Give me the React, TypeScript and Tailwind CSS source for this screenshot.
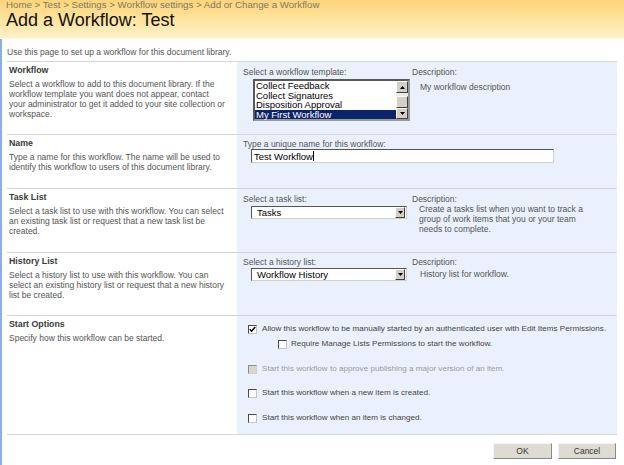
import React from "react";

function Arrow({ up }: { up?: boolean }) {
  return (
    <svg width="5" height="3" viewBox="0 0 5 3">
      <path d={up ? "M0 3 L2.5 0 L5 3 Z" : "M0 0 L5 0 L2.5 3 Z"} fill="#000" />
    </svg>
  );
}

function SBtn({ up, className }: { up?: boolean; className: string }) {
  return (
    <div
      className={
        "flex items-center justify-center bg-[#d4d0c8] border border-t-[#ffffff] border-l-[#ffffff] border-b-[#404040] border-r-[#404040] " +
        className
      }
    >
      <Arrow up={up} />
    </div>
  );
}

function Select({ value }: { value: string }) {
  return (
    <div className="ml-[8px] w-[156px] h-[13px] flex items-center bg-white border border-t-[#555555] border-l-[#555555] border-b-[#d4d0c8] border-r-[#d4d0c8]">
      <span className="flex-1 pl-[5px] text-[9.5px] leading-[11px] text-black whitespace-nowrap">{value}</span>
      <SBtn className="w-[10px] h-[11px] mr-[1px]" />
    </div>
  );
}

function Check({ checked, disabled }: { checked?: boolean; disabled?: boolean }) {
  return (
    <span
      className={
        disabled
          ? "inline-flex w-[9px] h-[9px] shrink-0 bg-[#d8d6d0] border border-t-[#8c8c8c] border-l-[#8c8c8c] border-b-[#d0d0d0] border-r-[#d0d0d0]"
          : "inline-flex w-[9px] h-[9px] shrink-0 items-center justify-center bg-white border border-t-[#4a4a4a] border-l-[#4a4a4a] border-b-[#c4c4c4] border-r-[#c4c4c4]"
      }
    >
      {checked && (
        <svg width="7" height="7" viewBox="0 0 7 7">
          <path d="M0.8 3.2 L2.6 5.2 L6.2 1" stroke="#000" strokeWidth="1.5" fill="none" />
        </svg>
      )}
    </span>
  );
}

function Section({
  h,
  title,
  desc,
  children,
}: {
  h: string;
  title: string;
  desc: React.ReactNode;
  children: React.ReactNode;
}) {
  return (
    <div className={"flex border-t border-[#d5d5d5] " + h}>
      <div className="w-[230px] shrink-0 pl-[2px] pt-[3px]">
        <div className="text-[8.8px] leading-[10px] font-bold text-[#3a3a3a] whitespace-nowrap">{title}</div>
        <div className="mt-[4px] text-[8.5px] leading-[10px] text-[#555555] whitespace-nowrap">{desc}</div>
      </div>
      <div className="flex-1 min-w-0 bg-[#eaf1fd]">{children}</div>
    </div>
  );
}

const label = "text-[8.5px] leading-[10px] text-[#555555] whitespace-nowrap";

export default function App() {
  return (
    <div className="w-[624px] h-[465px] bg-white overflow-hidden flex flex-col font-['Liberation_Sans',Arial,sans-serif]">
      {/* header */}
      <div className="h-[39px] shrink-0 pl-[6px] bg-gradient-to-b from-[#fdd47a] via-[#fee39c] to-[#fff1c8] border-b border-[#fff6dc]">
        <div className="text-[9.7px] leading-[10px] text-[#7f7865] whitespace-nowrap">
          Home &gt; Test &gt; Settings &gt; Workflow settings &gt; Add or Change a Workflow
        </div>
        <div className="text-[18px] leading-[20px] text-[#111111] whitespace-nowrap">Add a Workflow: Test</div>
      </div>

      {/* body */}
      <div className="flex-1 border-l-2 border-[#8aaee6]">
        <div className="h-[22px] pt-[8px] pl-[5px] text-[8.5px] leading-[10px] text-[#555555] whitespace-nowrap">
          Use this page to set up a workflow for this document library.
        </div>

        <div className="ml-[5px] w-[610px]">
          {/* Workflow */}
          <Section
            h="h-[73px]"
            title="Workflow"
            desc={
              <>
                Select a workflow to add to this document library. If the
                <br />
                workflow template you want does not appear, contact
                <br />
                your administrator to get it added to your site collection or
                <br />
                workspace.
              </>
            }
          >
            <div className="flex pl-[6px] pt-[5px]">
              <div className="w-[169px] shrink-0">
                <div className={label}>Select a workflow template:</div>
                <div className="ml-[10px] mt-[2px] w-[157px] h-[42px] flex bg-white border-2 border-t-[#5a5a5a] border-l-[#5a5a5a] border-b-[#9a9a9a] border-r-[#9a9a9a]">
                  <div className="flex-1 text-[9.5px] leading-[9.5px] text-black whitespace-nowrap">
                    <div className="h-[9.5px] pl-[1px]">Collect Feedback</div>
                    <div className="h-[9.5px] pl-[1px]">Collect Signatures</div>
                    <div className="h-[9.5px] pl-[1px]">Disposition Approval</div>
                    <div className="h-[9.5px] pl-[1px] bg-[#0a246a] text-white">My First Workflow</div>
                  </div>
                  <div className="w-[12px] flex flex-col bg-[#eeede8]">
                    <SBtn up className="h-[12px]" />
                    <div className="h-[3px]" />
                    <div className="h-[12px] bg-[#d4d0c8] border border-t-[#ffffff] border-l-[#ffffff] border-b-[#404040] border-r-[#404040]" />
                    <SBtn className="h-[11px]" />
                  </div>
                </div>
              </div>
              <div>
                <div className={label}>Description:</div>
                <div className={"mt-[5px] ml-[8px] " + label}>My workflow description</div>
              </div>
            </div>
          </Section>

          {/* Name */}
          <Section
            h="h-[54px]"
            title="Name"
            desc={
              <>
                Type a name for this workflow. The name will be used to
                <br />
                identify this workflow to users of this document library.
              </>
            }
          >
            <div className="pl-[6px] pt-[4px]">
              <div className={label}>Type a unique name for this workflow:</div>
              <div className="ml-[8px] w-[303px] h-[14px] flex items-center bg-white border border-t-[#555555] border-l-[#555555] border-b-[#d4d0c8] border-r-[#d4d0c8]">
                <span className="pl-[2px] text-[9.5px] leading-[11px] text-black whitespace-nowrap">Test Workflow</span>
                <span className="w-[1px] h-[10px] bg-black" />
              </div>
            </div>
          </Section>

          {/* Task List */}
          <Section
            h="h-[64px]"
            title="Task List"
            desc={
              <>
                Select a task list to use with this workflow. You can select
                <br />
                an existing task list or request that a new task list be
                <br />
                created.
              </>
            }
          >
            <div className="flex pl-[6px] pt-[5px]">
              <div className="w-[169px] shrink-0">
                <div className={label}>Select a task list:</div>
                <div className="mt-[2px]">
                  <Select value="Tasks" />
                </div>
              </div>
              <div>
                <div className={label}>Description:</div>
                <div className={"ml-[7px] " + label}>
                  Create a tasks list when you want to track a
                  <br />
                  group of work items that you or your team
                  <br />
                  needs to complete.
                </div>
              </div>
            </div>
          </Section>

          {/* History List */}
          <Section
            h="h-[63px]"
            title="History List"
            desc={
              <>
                Select a history list to use with this workflow. You can
                <br />
                select an existing history list or request that a new history
                <br />
                list be created.
              </>
            }
          >
            <div className="flex pl-[6px] pt-[4px]">
              <div className="w-[169px] shrink-0">
                <div className={label}>Select a history list:</div>
                <div className="mt-[1px]">
                  <Select value="Workflow History" />
                </div>
              </div>
              <div>
                <div className={label}>Description:</div>
                <div className={"mt-[2px] ml-[8px] " + label}>History list for workflow.</div>
              </div>
            </div>
          </Section>

          {/* Start Options */}
          <Section h="h-[119px]" title="Start Options" desc="Specify how this workflow can be started.">
            <div className="pl-[11px] text-[8.1px] leading-[10px] text-[#444444] whitespace-nowrap">
              <div className="mt-[8px] flex items-center gap-[5px]">
                <Check checked />
                <span>Allow this workflow to be manually started by an authenticated user with Edit Items Permissions.</span>
              </div>
              <div className="mt-[5px] ml-[30px] flex items-center gap-[4px]">
                <Check />
                <span>Require Manage Lists Permissions to start the workflow.</span>
              </div>
              <div className="mt-[15px] flex items-center gap-[5px]">
                <Check disabled />
                <span className="text-[#9a9a9a]">Start this workflow to approve publishing a major version of an item.</span>
              </div>
              <div className="mt-[14px] flex items-center gap-[5px]">
                <Check />
                <span>Start this workflow when a new item is created.</span>
              </div>
              <div className="mt-[15px] flex items-center gap-[5px]">
                <Check />
                <span>Start this workflow when an item is changed.</span>
              </div>
            </div>
          </Section>

          {/* footer */}
          <div className="border-t border-[#d5d5d5] flex justify-end gap-[6px] pt-[8px] pr-[1px]">
            <button className="w-[59px] h-[16px] bg-[#dedbd3] border border-t-[#f4f4f4] border-l-[#f4f4f4] border-b-[#8a8a8a] border-r-[#8a8a8a] text-[8.5px] leading-[10px] text-[#333333]">
              OK
            </button>
            <button className="w-[58px] h-[16px] bg-[#dedbd3] border border-t-[#f4f4f4] border-l-[#f4f4f4] border-b-[#8a8a8a] border-r-[#8a8a8a] text-[8.5px] leading-[10px] text-[#333333]">
              Cancel
            </button>
          </div>
        </div>
      </div>
    </div>
  );
}
